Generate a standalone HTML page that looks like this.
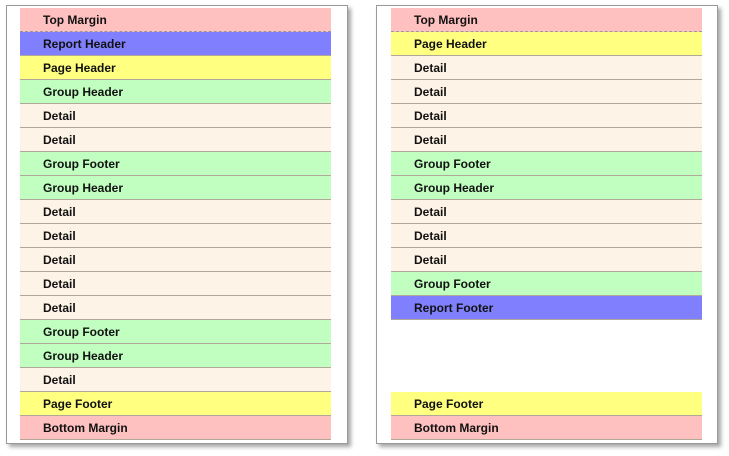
<!DOCTYPE html>
<html><head><style>
body{margin:0;width:729px;height:456px;background:#fff;position:relative;overflow:hidden;font-family:"Liberation Sans",sans-serif}
.pg{position:absolute;top:5px;height:437px;background:#fff;border:1px solid #999;box-shadow:3px 3px 4px rgba(0,0,0,.35)}
.b{position:absolute;height:24px;box-sizing:border-box;border-bottom:1px solid #b0a898;font-weight:bold;font-size:12px;line-height:23px;padding-top:1px;padding-left:23px;color:#111}
.tm,.bm{background:#ffc0c0}.rh,.rf{background:#8080ff}.ph,.pf{background:#ffff80}.g{background:#c0ffc0}.d{background:#fdf3e6}
.tm{border-bottom:1px dashed #999}
</style></head><body>
<div class="pg" style="left:6px;width:340px"></div>
<div class="pg" style="left:376px;width:340px"></div>
<script>
function put(x,y0,list){list.forEach(function(it){var d=document.createElement('div');d.className='b '+it[1];d.style.left=x+'px';d.style.width='311px';d.style.top=(it[2]!==undefined?it[2]:y0)+'px';d.textContent=it[0];document.body.appendChild(d);y0=(it[2]!==undefined?it[2]:y0)+24;});}
put(20,8,[["Top Margin","tm"],["Report Header","rh"],["Page Header","ph"],["Group Header","g"],["Detail","d"],["Detail","d"],["Group Footer","g"],["Group Header","g"],["Detail","d"],["Detail","d"],["Detail","d"],["Detail","d"],["Detail","d"],["Group Footer","g"],["Group Header","g"],["Detail","d"],["Page Footer","pf"],["Bottom Margin","bm"]]);
put(391,8,[["Top Margin","tm"],["Page Header","ph"],["Detail","d"],["Detail","d"],["Detail","d"],["Detail","d"],["Group Footer","g"],["Group Header","g"],["Detail","d"],["Detail","d"],["Detail","d"],["Group Footer","g"],["Report Footer","rf"],["Page Footer","pf",392],["Bottom Margin","bm"]]);
</script>
</body></html>
